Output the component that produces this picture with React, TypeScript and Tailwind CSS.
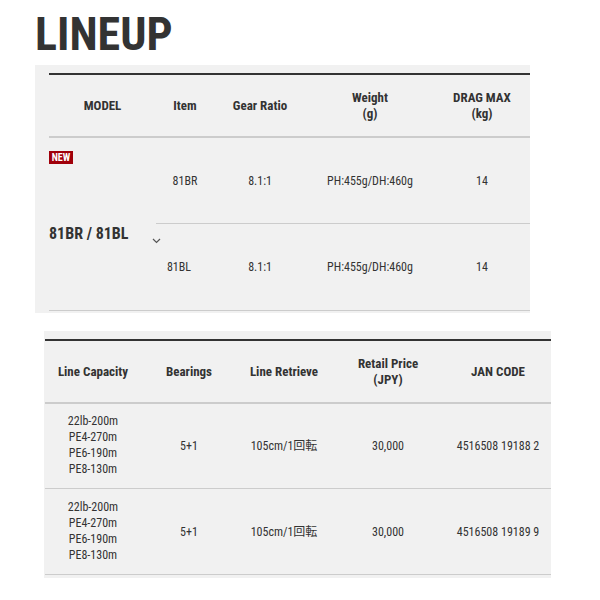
import React from "react";

const H = "flex items-center justify-center text-center font-bold text-[13px] leading-[16px] text-[#333]";
const C = "flex items-center justify-center text-center text-[12px] leading-[16px] text-[#333]";

function Chevron() {
  return (
    <svg width="9" height="6" viewBox="0 0 9 6" className="translate-y-[14px] translate-x-[1px]">
      <path d="M1 1l3.5 3.5L8 1" fill="none" stroke="#555" strokeWidth="1.2" />
    </svg>
  );
}

const caps = ["22lb-200m", "PE4-270m", "PE6-190m", "PE8-130m"];

export default function App() {
  return (
    <div className="w-[600px] h-[600px] bg-white pl-[35px] font-['Roboto_Condensed','Noto_Sans_CJK_JP',sans-serif] text-[#333]">
      <h1 className="pt-[11px] text-[46px] leading-[46px] font-bold text-[#333]">LINEUP</h1>

      <div className="mt-[8px] w-[495px] bg-[#f1f1f1] pl-[14px] pt-[8px] pb-[2px]">
        <div className="grid grid-cols-[107px_58px_92px_128px_96px] grid-rows-[63px_86px_86px] border-t-2 border-[#333] border-b border-b-[#ccc]">
          <div className={`${H} border-b-2 border-[#ccc]`}>MODEL</div>
          <div className={`${H} border-b-2 border-[#ccc]`}>Item</div>
          <div className={`${H} border-b-2 border-[#ccc]`}>Gear Ratio</div>
          <div className={`${H} border-b-2 border-[#ccc]`}>Weight<br />(g)</div>
          <div className={`${H} border-b-2 border-[#ccc]`}>DRAG MAX<br />(kg)</div>

          <div className="row-span-2 flex flex-col items-start pt-[13px]">
            <span className="bg-[#a0000a] text-white font-bold text-[10px] leading-[13px] w-[24px] text-center">NEW</span>
            <div className="mt-[60px] flex items-start gap-[22px] whitespace-nowrap">
              <span className="font-bold text-[16px] leading-[20px] text-[#333]">81BR / 81BL</span>
              <Chevron />
            </div>
          </div>
          <div className={`${C} border-b border-[#ccc]`}>81BR</div>
          <div className={`${C} border-b border-[#ccc]`}>8.1:1</div>
          <div className={`${C} border-b border-[#ccc]`}>PH:455g/DH:460g</div>
          <div className={`${C} border-b border-[#ccc]`}>14</div>

          <div className={`${C} pr-[12px]`}>81BL</div>
          <div className={C}>8.1:1</div>
          <div className={C}>PH:455g/DH:460g</div>
          <div className={C}>14</div>
        </div>
      </div>

      <div className="mt-[18px] ml-[9px] w-[507px] bg-[#f1f1f1] pl-[1px] pt-[8px] pb-[3px]">
        <div className="grid grid-cols-[96px_96px_94px_114px_106px] grid-rows-[63px_85px_86px] border-t-2 border-[#333]">
          <div className={`${H} border-b-2 border-[#ccc]`}>Line Capacity</div>
          <div className={`${H} border-b-2 border-[#ccc]`}>Bearings</div>
          <div className={`${H} border-b-2 border-[#ccc]`}>Line Retrieve</div>
          <div className={`${H} border-b-2 border-[#ccc]`}>Retail Price<br />(JPY)</div>
          <div className={`${H} border-b-2 border-[#ccc]`}>JAN CODE</div>

          {["4516508 19188 2", "4516508 19189 9"].map((jan) => (
            <React.Fragment key={jan}>
              <div className={`${C} flex-col border-b border-[#ccc] leading-[15.5px] pb-[2px]`}>
                {caps.map((c) => (
                  <span key={c}>{c}</span>
                ))}
              </div>
              <div className={`${C} border-b border-[#ccc]`}>5+1</div>
              <div className={`${C} border-b border-[#ccc]`}>105cm/1回転</div>
              <div className={`${C} border-b border-[#ccc]`}>30,000</div>
              <div className={`${C} border-b border-[#ccc]`}>{jan}</div>
            </React.Fragment>
          ))}
        </div>
      </div>
    </div>
  );
}
